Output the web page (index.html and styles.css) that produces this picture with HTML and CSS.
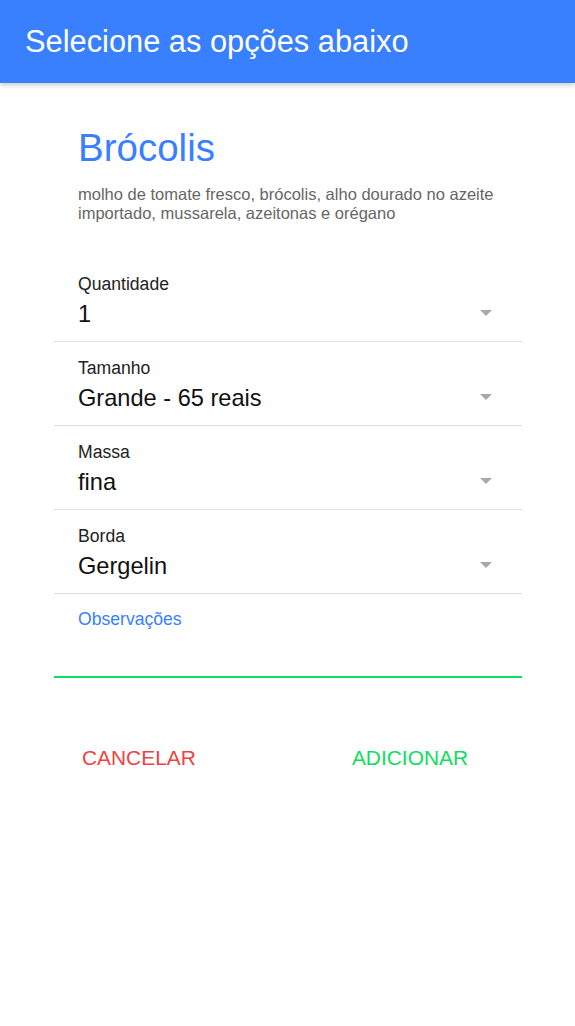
FILE: index.html
```html
<!DOCTYPE html>
<html lang="pt-BR">
<head>
<meta charset="utf-8">
<title>Selecione as opções abaixo</title>
<link rel="stylesheet" href="styles.css">
</head>
<body>
<header class="toolbar">
  <h1 class="toolbar-title">Selecione as opções abaixo</h1>
</header>
<main class="content">
  <section class="intro">
    <h2 class="product-name">Brócolis</h2>
    <p class="product-desc">molho de tomate fresco, brócolis, alho dourado no azeite importado, mussarela, azeitonas e orégano</p>
  </section>
  <div class="list">
    <div class="item">
      <div class="item-label">Quantidade</div>
      <div class="item-value-row"><span class="item-value">1</span><span class="select-icon"></span></div>
    </div>
    <div class="item">
      <div class="item-label">Tamanho</div>
      <div class="item-value-row"><span class="item-value">Grande - 65 reais</span><span class="select-icon"></span></div>
    </div>
    <div class="item">
      <div class="item-label">Massa</div>
      <div class="item-value-row"><span class="item-value">fina</span><span class="select-icon"></span></div>
    </div>
    <div class="item">
      <div class="item-label">Borda</div>
      <div class="item-value-row"><span class="item-value">Gergelin</span><span class="select-icon"></span></div>
    </div>
    <div class="item item-notes">
      <label class="notes-label" for="obs">Observações</label>
      <textarea id="obs" class="notes-input"></textarea>
    </div>
  </div>
  <div class="actions">
    <button class="btn btn-cancel">CANCELAR</button>
    <button class="btn btn-add">ADICIONAR</button>
  </div>
</main>
</body>
</html>
```

FILE: styles.css
```css
* { box-sizing: border-box; }

html, body {
  margin: 0;
  padding: 0;
  background: #ffffff;
  font-family: "Liberation Sans", Arial, sans-serif;
}

.toolbar {
  height: 83px;
  background: #3880ff;
  display: flex;
  align-items: center;
  padding-left: 25px;
  box-shadow: 0 2px 5px rgba(0, 0, 0, 0.22);
  position: relative;
  z-index: 2;
}

.toolbar-title {
  margin: 0;
  font-size: 30.8px;
  font-weight: normal;
  color: #ffffff;
  line-height: 36px;
}

.content {
  padding: 0 53px 0 54px;
}

.intro {
  padding: 43px 24px 0;
}

.product-name {
  margin: 0;
  font-size: 38.5px;
  line-height: 44px;
  font-weight: normal;
  color: #3880ff;
}

.product-desc {
  margin: 15px 0 0;
  font-size: 16.5px;
  line-height: 19px;
  color: #666666;
}

.list {
  margin-top: 35px;
}

.item {
  padding: 16px 30px 14px 24px;
  border-bottom: 1px solid #dedede;
}

.item-label {
  font-size: 17.6px;
  line-height: 20px;
  color: #222222;
}

.item-value-row {
  margin-top: 7px;
  display: flex;
  align-items: center;
  justify-content: space-between;
}

.item-value {
  font-size: 23.6px;
  line-height: 26px;
  color: #111111;
}

.select-icon {
  width: 0;
  height: 0;
  border-left: 6px solid transparent;
  border-right: 6px solid transparent;
  border-top: 6px solid #a8a8a8;
  margin-bottom: 2px;
}

.item-notes {
  padding: 15px 30px 0 24px;
  height: 84px;
  border-bottom: 2px solid #10dc60;
  display: flex;
  flex-direction: column;
}

.notes-label {
  font-size: 17.6px;
  line-height: 20px;
  color: #3880ff;
}

.notes-input {
  flex: 1;
  border: none;
  outline: none;
  resize: none;
  background: transparent;
  font-family: inherit;
  font-size: 17.6px;
  padding: 0;
}

.actions {
  margin-top: 68px;
  display: flex;
  justify-content: space-between;
  padding: 0 54px 0 28px;
}

.btn {
  background: none;
  border: none;
  padding: 0;
  font-family: "Liberation Sans", Arial, sans-serif;
  font-size: 20.9px;
  line-height: 24px;
  cursor: pointer;
}

.btn-cancel { color: #f04141; }
.btn-add { color: #10dc60; }
```
